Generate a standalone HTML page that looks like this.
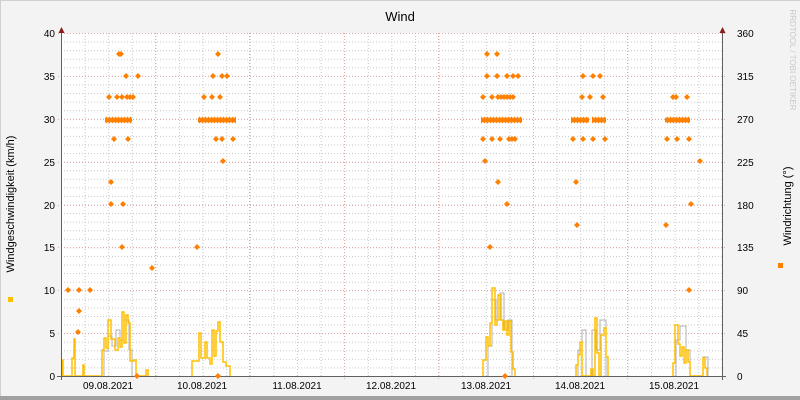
<!DOCTYPE html>
<html><head><meta charset="utf-8"><style>
html,body{margin:0;padding:0;background:#f3f3f3;}
svg{display:block;font-family:"Liberation Sans","DejaVu Sans",sans-serif;}
</style></head><body>
<svg width="800" height="400" viewBox="0 0 800 400" xmlns="http://www.w3.org/2000/svg">
<defs>
<pattern id="hm" patternUnits="userSpaceOnUse" x="61" y="33" width="3" height="8.575"><rect x="0" y="0" width="1" height="1" fill="#c8c8c8"/></pattern>
<pattern id="vm" patternUnits="userSpaceOnUse" x="61" y="33" width="23.6" height="3"><rect x="0" y="0" width="1" height="1" fill="#c8c8c8"/></pattern>
<pattern id="dia" patternUnits="userSpaceOnUse" x="0" y="116.5" width="3" height="7"><path d="M1.5,0l3,3.5-3,3.5-3-3.5z" fill="#ff8000"/><path d="M4.5,0l3,3.5-3,3.5-3-3.5z" fill="#ff8000"/></pattern>
</defs>
<rect x="0" y="0" width="800" height="400" fill="#f3f3f3"/>
<rect x="0" y="0" width="800" height="1" fill="#d0d0d0"/>
<rect x="0" y="0" width="1" height="400" fill="#d0d0d0"/>
<rect x="0" y="396" width="800" height="4" fill="#a0a0a0"/>
<rect x="61" y="33" width="662" height="343" fill="#fff"/>
<rect x="61" y="33" width="662" height="343" fill="url(#hm)"/>
<rect x="61" y="33" width="662" height="343" fill="url(#vm)"/>
<g stroke="#e3a8a8" stroke-width="1" stroke-dasharray="1,2">
<line x1="58" x2="726" y1="33.5" y2="33.5"/><line x1="58" x2="726" y1="76.5" y2="76.5"/><line x1="58" x2="726" y1="119.5" y2="119.5"/><line x1="58" x2="726" y1="162.5" y2="162.5"/><line x1="58" x2="726" y1="205.5" y2="205.5"/><line x1="58" x2="726" y1="247.5" y2="247.5"/><line x1="58" x2="726" y1="290.5" y2="290.5"/><line x1="58" x2="726" y1="333.5" y2="333.5"/>
<line y1="33" y2="379" x1="155.5" x2="155.5"/><line y1="33" y2="379" x1="249.5" x2="249.5"/><line y1="33" y2="379" x1="344.5" x2="344.5"/><line y1="33" y2="379" x1="438.5" x2="438.5"/><line y1="33" y2="379" x1="533.5" x2="533.5"/><line y1="33" y2="379" x1="627.5" x2="627.5"/>
</g>
<polyline fill="none" stroke="#b0b0b0" stroke-width="1" points="104,376 104,351 108,351 108,336 112,336 112,346 116,346 116,330 120,330 120,340 124,340 124,320 129,320 129,350 132,350 132,376"/>
<polyline fill="none" stroke="#b0b0b0" stroke-width="1" points="488,376 488,346 492,346 492,300 496,300 496,320 500,320 500,293 504,293 504,330 508,330 508,320 512,320 512,376"/>
<polyline fill="none" stroke="#b0b0b0" stroke-width="1" points="578,376 578,350 582,350 582,330 586,330 586,376 592,376 592,330 596,330 596,350 600,350 600,320 606,320 606,376"/>
<polyline fill="none" stroke="#b0b0b0" stroke-width="1" points="676,376 676,340 680,340 680,326 686,326 686,350 690,350 690,376 703,376 703,357 708,357 708,376"/>
<g fill="none" stroke="#ffbf00" stroke-width="1.5">
<polyline points="61,376 62,376 62,360 63,360 63,376 72,376 72,358 74,358 74,339 75,339 75,376 83,376 83,365 84,365 84,376 102,376 102,350 104,350 104,338 106,338 106,348 108,348 108,320 111,320 111,339 115,339 115,350 118,350 118,338 120,338 120,347 122,347 122,312 124,312 124,343 126,343 126,315 128,315 128,323 130,323 130,361 134,361 134,360 136,360 136,376 146,376 146,370 148,370 148,376"/>
<polyline points="192,376 192,361 199,361 199,333 201,333 201,358 205,358 205,342 207,342 207,358 210,358 210,364 212,364 212,330 214,330 214,356 216,356 216,331 218,331 218,322 220,322 220,342 223,342 223,362 226,362 226,366 230,366 230,376"/>
<polyline points="483,376 483,360 486,360 486,337 488,337 488,346 490,346 490,323 492,323 492,288 495,288 495,325 497,325 497,320 498,320 498,295 501,295 501,320 503,320 503,330 505,330 505,321 507,321 507,335 509,335 509,321 511,321 511,352 513,352 513,369 515,369 515,376"/>
<polyline points="576,376 576,365 578,365 578,355 580,355 580,342 582,342 582,376 591,376 591,369 593,369 593,376 595,376 595,318 597,318 597,353 599,353 599,376 601,376 601,335 604,335 604,328 606,328 606,357 608,357 608,376"/>
<polyline points="673,376 673,363 675,363 675,325 678,325 678,344 680,344 680,356 682,356 682,347 684,347 684,363 686,363 686,350 688,350 688,362 690,362 690,376 703,376 703,358 705,358 705,368 707,368 707,376"/>
</g>
<g stroke="#606060" stroke-width="1">
<line x1="61.5" y1="30" x2="61.5" y2="380"/>
<line x1="722.5" y1="30" x2="722.5" y2="380"/>
<line x1="57" y1="376.5" x2="726" y2="376.5"/>
</g>
<polygon points="58.5,33 61.5,27 64.5,33" fill="#8b1a1a"/>
<polygon points="719.5,33 722.5,27 725.5,33" fill="#8b1a1a"/>
<g fill="#ff8000">
<path d="M68,287l3,3-3,3-3-3zM79,287l3,3-3,3-3-3zM90,287l3,3-3,3-3-3zM79,308l3,3-3,3-3-3zM78,329l3,3-3,3-3-3zM109,94l3,3-3,3-3-3zM114,136l3,3-3,3-3-3zM111,179l3,3-3,3-3-3zM111,201l3,3-3,3-3-3zM119,51l3,3-3,3-3-3zM121,51l3,3-3,3-3-3zM117,94l3,3-3,3-3-3zM122,94l3,3-3,3-3-3zM126,73l3,3-3,3-3-3zM127,94l3,3-3,3-3-3zM130,94l3,3-3,3-3-3zM133,94l3,3-3,3-3-3zM138,73l3,3-3,3-3-3zM128,136l3,3-3,3-3-3zM123,201l3,3-3,3-3-3zM122,244l3,3-3,3-3-3zM152,265l3,3-3,3-3-3zM137,373l3,3-3,3-3-3z"/>
<path d="M197,244l3,3-3,3-3-3zM218,51l3,3-3,3-3-3zM213,73l3,3-3,3-3-3zM222,73l3,3-3,3-3-3zM227,73l3,3-3,3-3-3zM204,94l3,3-3,3-3-3zM212,94l3,3-3,3-3-3zM220,94l3,3-3,3-3-3zM216,136l3,3-3,3-3-3zM222,136l3,3-3,3-3-3zM233,136l3,3-3,3-3-3zM223,158l3,3-3,3-3-3zM218,373l3,3-3,3-3-3z"/>
<path d="M487,51l3,3-3,3-3-3zM497,51l3,3-3,3-3-3zM487,73l3,3-3,3-3-3zM497,73l3,3-3,3-3-3zM507,73l3,3-3,3-3-3zM513,73l3,3-3,3-3-3zM518,73l3,3-3,3-3-3zM483,94l3,3-3,3-3-3zM492,94l3,3-3,3-3-3zM483,136l3,3-3,3-3-3zM492,136l3,3-3,3-3-3zM500,136l3,3-3,3-3-3zM485,158l3,3-3,3-3-3zM498,179l3,3-3,3-3-3zM507,201l3,3-3,3-3-3zM490,244l3,3-3,3-3-3zM505,373l3,3-3,3-3-3z"/>
<path d="M583,73l3,3-3,3-3-3zM593,73l3,3-3,3-3-3zM600,73l3,3-3,3-3-3zM582,94l3,3-3,3-3-3zM590,94l3,3-3,3-3-3zM603,94l3,3-3,3-3-3zM573,136l3,3-3,3-3-3zM583,136l3,3-3,3-3-3zM593,136l3,3-3,3-3-3zM605,136l3,3-3,3-3-3zM576,179l3,3-3,3-3-3zM577,222l3,3-3,3-3-3z"/>
<path d="M673,94l3,3-3,3-3-3zM676,94l3,3-3,3-3-3zM687,94l3,3-3,3-3-3zM667,136l3,3-3,3-3-3zM677,136l3,3-3,3-3-3zM689,136l3,3-3,3-3-3zM700,158l3,3-3,3-3-3zM691,201l3,3-3,3-3-3zM666,222l3,3-3,3-3-3zM689,287l3,3-3,3-3-3z"/>
</g>
<g fill="url(#dia)">
<rect x="105" y="116.5" width="27" height="7"/>
<rect x="198" y="116.5" width="38" height="7"/>
<rect x="481" y="116.5" width="41" height="7"/>
<rect x="571" y="116.5" width="18" height="7"/><rect x="592" y="116.5" width="14" height="7"/>
<rect x="665" y="116.5" width="25" height="7"/>
</g>
<g fill="#ff8000">
<path d="M498,94l3,3-3,3-3-3zM501,94l3,3-3,3-3-3zM504,94l3,3-3,3-3-3zM507,94l3,3-3,3-3-3zM510,94l3,3-3,3-3-3zM513,94l3,3-3,3-3-3zM509,136l3,3-3,3-3-3zM512,136l3,3-3,3-3-3zM515,136l3,3-3,3-3-3z"/>
</g>
<text x="400" y="21" font-size="13" text-anchor="middle" fill="#000">Wind</text>
<g font-size="10" fill="#000" text-anchor="end">
<text x="55" y="37">40</text><text x="55" y="80">35</text><text x="55" y="123">30</text><text x="55" y="166">25</text><text x="55" y="209">20</text><text x="55" y="251">15</text><text x="55" y="294">10</text><text x="55" y="337">5</text><text x="55" y="380">0</text>
</g>
<g font-size="10" fill="#000" text-anchor="start">
<text x="737" y="37">360</text><text x="737" y="80">315</text><text x="737" y="123">270</text><text x="737" y="166">225</text><text x="737" y="209">180</text><text x="737" y="251">135</text><text x="737" y="294">90</text><text x="737" y="337">45</text><text x="737" y="380">0</text>
</g>
<g font-size="10" fill="#000" text-anchor="middle">
<text x="108" y="389">09.08.2021</text><text x="202" y="389">10.08.2021</text><text x="297" y="389">11.08.2021</text><text x="391" y="389">12.08.2021</text><text x="486" y="389">13.08.2021</text><text x="580" y="389">14.08.2021</text><text x="674" y="389">15.08.2021</text>
</g>
<text transform="translate(14,204) rotate(-90)" font-size="11" text-anchor="middle" fill="#000">Windgeschwindigkeit (km/h)</text>
<text transform="translate(791,206) rotate(-90)" font-size="11" text-anchor="middle" fill="#000">Windrichtung (°)</text>
<text transform="translate(790,60) rotate(90)" font-size="8" text-anchor="middle" fill="#c8c8c8">RRDTOOL / TOBI OETIKER</text>
<rect x="8" y="297" width="5" height="5" fill="#ffbf00"/>
<rect x="778" y="263" width="5" height="5" fill="#ff8000"/>
</svg>
</body></html>
